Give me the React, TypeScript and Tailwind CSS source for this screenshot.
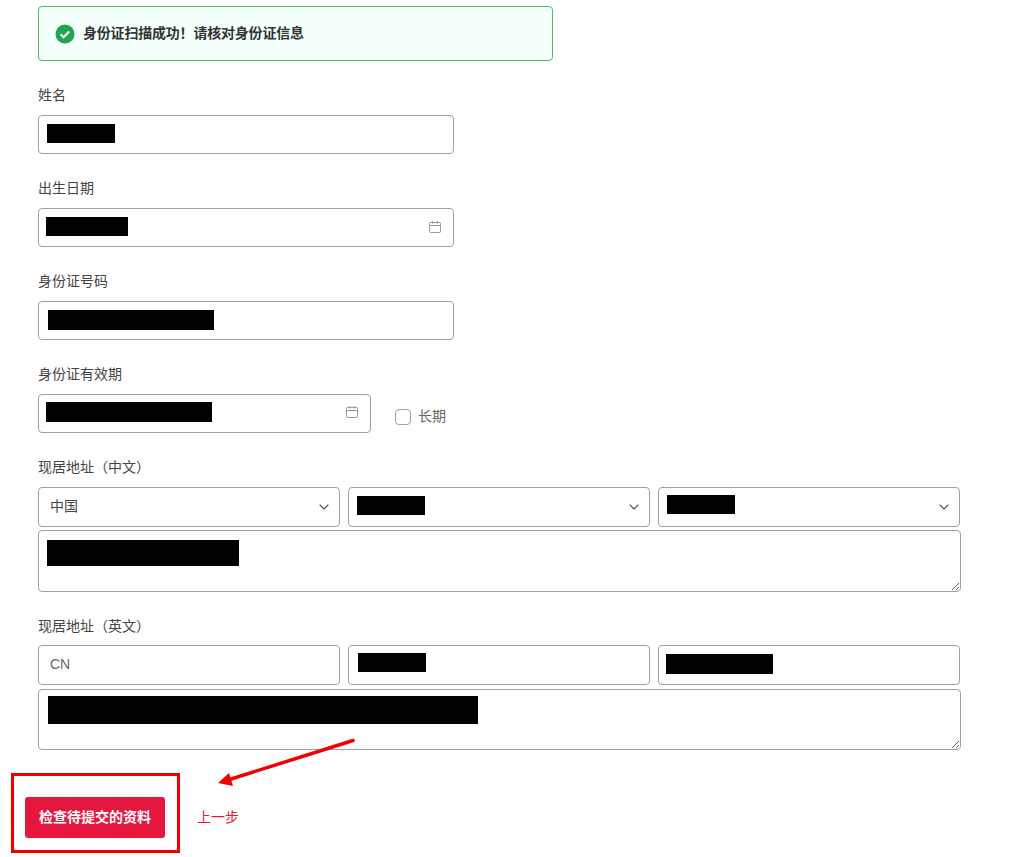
import { ChevronDown } from "lucide-react";
import type { ReactNode } from "react";

const FONT = "font-['Liberation_Sans','Noto_Sans_CJK_SC',sans-serif]";

const CalendarIcon = () => (
  <svg width="14" height="14" viewBox="0 0 14 14" fill="none" stroke="#9a9a9a" strokeWidth="1" className="shrink-0">
    <rect x="1.5" y="2.5" width="11" height="10" rx="1" />
    <path d="M1.5 5.5h11M4.5 1v2.5M9.5 1v2.5" />
  </svg>
);

const CheckCircle = () => (
  <svg width="20" height="20" viewBox="0 0 20 20" className="shrink-0">
    <circle cx="10" cy="10" r="9.5" fill="#1fa64e" />
    <path d="M5.6 10.3l3 3 5.6-5.8" fill="none" stroke="#fff" strokeWidth="2" />
  </svg>
);

// black redaction blocks sit where the value text would be
const Box = ({ className, children }: { className: string; children: ReactNode }) => (
  <div className={`flex items-start bg-white border border-[#a0a0a0] rounded-[4px] ${className}`}>{children}</div>
);

const Label = ({ children, className }: { children: ReactNode; className: string }) => (
  <div className={`h-5 text-[14px] leading-[22px] text-[#444] ${className}`}>{children}</div>
);

const Select = ({ children }: { children: ReactNode }) => (
  <Box className="w-[302px] h-10 justify-between">
    {children}
    <ChevronDown size={16} strokeWidth={1.7} className="text-[#555] mt-[11px] mr-[7px]" />
  </Box>
);

const NoteBox = ({ className, bar }: { className: string; bar: string }) => (
  <div className={`relative w-[923px] ${className}`}>
    <textarea
      readOnly
      aria-label="地址"
      className="block w-full h-full resize-y bg-white border border-[#a0a0a0] rounded-[4px] outline-none"
    />
    <span className={`absolute bg-black ${bar}`} />
  </div>
);

export default function App() {
  return (
    <div className={`relative h-[857px] w-[1035px] overflow-hidden bg-white pl-[38px] pt-[6px] ${FONT}`}>
      <div className="flex h-[55px] w-[515px] items-center gap-[8px] rounded-[4px] border border-[#4cb968] bg-[#f5fffb] pl-[16px]">
        <CheckCircle />
        <span className="text-[14px] font-bold tracking-[-0.2px] text-[#333]">{"身份证扫描成功\uFF01请核对身份证信息"}</span>
      </div>

      <div className="mt-[23px]">
        <Label className="mb-[11px]">姓名</Label>
        <Box className="w-[416px] h-[39px]">
          <span className="mt-[8px] ml-[8px] h-[19px] w-[68px] bg-black" />
        </Box>
      </div>

      <div className="mt-[23px]">
        <Label className="mb-[11px]">出生日期</Label>
        <Box className="w-[416px] h-[39px] justify-between">
          <span className="mt-[8px] ml-[7px] h-[19px] w-[82px] bg-black" />
          <span className="mt-[11px] mr-[11px]">
            <CalendarIcon />
          </span>
        </Box>
      </div>

      <div className="mt-[23px]">
        <Label className="mb-[11px]">身份证号码</Label>
        <Box className="w-[416px] h-[39px]">
          <span className="mt-[8px] ml-[9px] h-[20px] w-[166px] bg-black" />
        </Box>
      </div>

      <div className="mt-[23px]">
        <Label className="mb-[11px]">身份证有效期</Label>
        <div className="flex items-center">
          <Box className="w-[333px] h-[39px] justify-between">
            <span className="mt-[7px] ml-[7px] h-[20px] w-[166px] bg-black" />
            <span className="mt-[10px] mr-[11px]">
              <CalendarIcon />
            </span>
          </Box>
          <label className="ml-[24px] mt-[6px] flex items-center gap-[7px] text-[14px] text-[#666]">
            <span className="h-[16px] w-[16px] rounded-[4px] border border-[#a0a0a0] bg-white" />
            长期
          </label>
        </div>
      </div>

      <div className="mt-[23px]">
        <Label className="mb-[11px]">{"现居地址\uFF08中文\uFF09"}</Label>
        <div className="flex gap-[8px]">
          <Select>
            <span className="mt-[8px] ml-[11px] text-[14px] leading-5 text-[#444]">中国</span>
          </Select>
          <Select>
            <span className="mt-[8px] ml-[8px] h-[19px] w-[68px] bg-black" />
          </Select>
          <Select>
            <span className="mt-[7px] ml-[8px] h-[19px] w-[68px] bg-black" />
          </Select>
        </div>
        <div className="mt-[3px]">
          <NoteBox className="h-[62px]" bar="left-[9px] top-[10px] h-[26px] w-[192px]" />
        </div>
      </div>

      <div className="mt-[23px]">
        <Label className="mb-[10px]">{"现居地址\uFF08英文\uFF09"}</Label>
        <div className="flex gap-[8px]">
          <Box className="w-[302px] h-10">
            <span className="mt-[8px] ml-[11px] text-[14px] leading-5 text-[#666]">CN</span>
          </Box>
          <Box className="w-[302px] h-10">
            <span className="mt-[7px] ml-[9px] h-[19px] w-[68px] bg-black" />
          </Box>
          <Box className="w-[302px] h-10">
            <span className="mt-[8px] ml-[7px] h-[20px] w-[107px] bg-black" />
          </Box>
        </div>
        <div className="mt-[4px]">
          <NoteBox className="h-[61px]" bar="left-[10px] top-[7px] h-[28px] w-[430px]" />
        </div>
      </div>

      <div className="mt-[47px] -ml-[13px] flex items-center gap-[32px]">
        <button className="h-[41px] w-[140px] rounded-[3px] bg-[#e5173f] text-[14px] font-bold text-white">
          检查待提交的资料
        </button>
        <a className="text-[14px] text-[#e5173f]">上一步</a>
      </div>

      {/* red annotation drawn on top of the screenshot */}
      <div className="absolute left-[11px] top-[773px] h-[80px] w-[169px] border-[3px] border-[#f00000]" />
      <svg className="absolute left-[210px] top-[730px]" width="155" height="60" viewBox="0 0 155 60">
        <path d="M143 10.5L18 50" stroke="#f00000" strokeWidth="3.5" strokeLinecap="round" fill="none" />
        <path d="M8 53L19 43L23 56Z" fill="#f00000" />
      </svg>
    </div>
  );
}
